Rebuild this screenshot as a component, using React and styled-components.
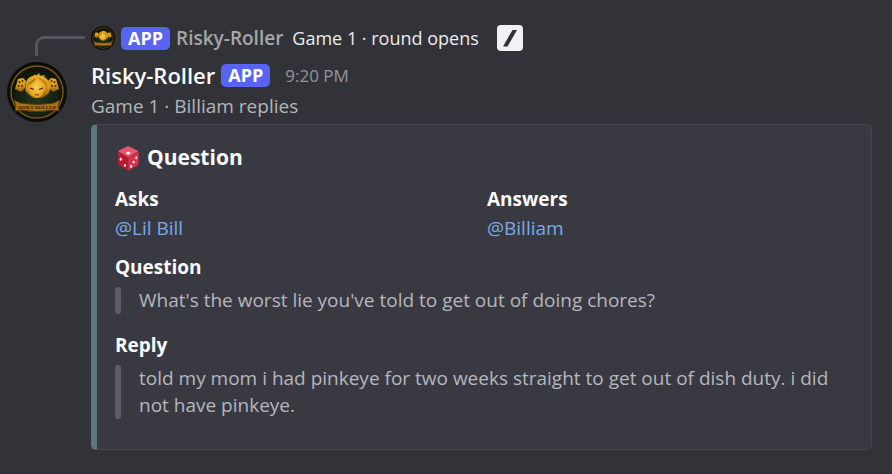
import React from "react";
import styled, { createGlobalStyle, css } from "styled-components";

const fields = [
  { name: "Asks", mention: "@Lil Bill", inline: true },
  { name: "Answers", mention: "@Billiam", inline: true },
  {
    name: "Question",
    quote: "What's the worst lie you've told to get out of doing chores?",
  },
  {
    name: "Reply",
    quote:
      "told my mom i had pinkeye for two weeks straight to get out of dish duty. i did not have pinkeye.",
  },
];

const Emblem = ({ size, detailed }) => (
  <svg width={size} height={size} viewBox="0 0 60 60" aria-hidden="true">
    <defs>
      <linearGradient id={`gold-${size}`} x1="0" y1="0" x2="0" y2="1">
        <stop offset="0" stopColor="#e8b022" />
        <stop offset="0.6" stopColor="#cf9016" />
        <stop offset="1" stopColor="#8a5a0a" />
      </linearGradient>
      <radialGradient id={`face-${size}`} cx="50%" cy="45%" r="55%">
        <stop offset="0" stopColor="#fbd052" />
        <stop offset="1" stopColor="#e09c1a" />
      </radialGradient>
      <radialGradient id={`field-${size}`} cx="50%" cy="60%" r="50%">
        <stop offset="0" stopColor="#21391d" />
        <stop offset="1" stopColor="#10150c" />
      </radialGradient>
    </defs>
    <circle cx="30" cy="30" r="30" fill="#0d0b05" />
    <circle
      cx="30"
      cy="30"
      r="26"
      fill={`url(#field-${size})`}
      stroke="#80570f"
      strokeWidth="1.4"
    />
    <g fill={`url(#gold-${size})`}>
      <path d="M27 12l2 2 3-3 1 3 5-1-2 4h-9z" />
      <path d="M11 17l5-1 3 3-1 7-4 4-6-3z" />
      <path d="M49 17l-5-1-3 3 1 7 4 4 6-3z" />
      <path d="M29 13c-6 1-10 4-10 9-1 4-1 7 1 9l6 5h9l6-4c2-3 3-6 2-9-1-6-6-10-14-10z" />
    </g>
    <path
      d="M21 25c1-5 5-8 8-9 5 2 9 4 9 9 0 6-4 10-8 11-5-1-9-5-9-11z"
      fill={`url(#face-${size})`}
    />
    <path
      d="M20 24c2-4 5-6 9-8-1 4-5 6-9 8zM40 25c-2-4-5-6-9-9 5 1 9 4 9 9z"
      fill="#b37812"
    />
    {detailed && (
      <>
        <path
          d="M23 26l4 1.500M36 26l-4 1.500"
          stroke="#402504"
          strokeWidth="1.300"
        />
        <path d="M28 32.500q2 1 4 0" stroke="#a33a13" strokeWidth="1.200" fill="none" />
        <g fill="#4a300a">
          <circle cx="12.500" cy="20" r="1" />
          <circle cx="15.500" cy="19" r="1" />
          <circle cx="11.500" cy="24" r="1" />
          <circle cx="15" cy="24" r="1" />
          <circle cx="44.500" cy="19" r="1" />
          <circle cx="47.500" cy="20" r="1" />
          <circle cx="45" cy="24" r="1" />
          <circle cx="48.500" cy="24" r="1" />
        </g>
      </>
    )}
    <path
      d="M7 38l6 3q17 3 34 0l6-3-2 6 1 5-6-1q-16 3-32 0l-6 1 1-5z"
      fill="#a87317"
      stroke="#5b3a08"
      strokeWidth="0.800"
    />
    {detailed && (
      <BannerText x="30" y="47">
        RISKY ROLLER
      </BannerText>
    )}
  </svg>
);

const DieIcon = () => (
  <svg width="26" height="28" viewBox="0 0 26 28" aria-hidden="true">
    <g transform="translate(2 2) scale(.94 .95)">
      <path d="M12 1l10 5q1 .5 0 1.200L12 13 2 7q-1-.6 0-1.200z" fill="#ec566b" />
      <path d="M1 7l11 6v14L2.500 21.500Q1 20.700 1 19z" fill="#b81c35" />
      <path d="M23 7l-11 6v14l9.500-5.500Q23 20.700 23 19z" fill="#d6314a" />
      <g fill="#fff">
        <ellipse cx="12" cy="8.500" rx="2.300" ry="1.500" />
        <ellipse cx="4" cy="15" rx="1.100" ry="1.500" />
        <ellipse cx="8.500" cy="21.500" rx="1.100" ry="1.500" />
        <ellipse cx="20.500" cy="13.500" rx="1.100" ry="1.500" />
        <ellipse cx="17.700" cy="18" rx="1.100" ry="1.500" />
        <ellipse cx="15" cy="22.500" rx="1.100" ry="1.500" />
      </g>
    </g>
  </svg>
);

const SlashIcon = () => (
  <svg width="26" height="26" viewBox="0 0 26 26" role="img" aria-label="Slash command">
    <rect width="26" height="26" rx="4" fill="#f2f2f4" />
    <path d="M15.500 5h4.500L10.500 21.500H6z" fill="#303136" />
  </svg>
);

const App = () => (
  <>
    <GlobalStyle />
    <Message>
      <Spine />
      <ReplyRow>
        <Emblem size={24} />
        <AppTag>APP</AppTag>
        <ReplyAuthor>Risky-Roller</ReplyAuthor>
        <ReplyText>Game 1 · round opens</ReplyText>
        <SlashIcon />
      </ReplyRow>
      <Avatar>
        <Emblem size={60} detailed />
      </Avatar>
      <Body>
        <Header>
          <Author>Risky-Roller</Author>
          <AppTag>APP</AppTag>
          <Time>9:20 PM</Time>
        </Header>
        <Content>Game 1 · Billiam replies</Content>
        <Embed>
          <Title>
            <DieIcon />
            Question
          </Title>
          <Fields>
            {fields.map(({ name, mention, quote, inline }) => (
              <Field key={name} $inline={inline}>
                <FieldName>{name}</FieldName>
                {mention && <Mention href="#">{mention}</Mention>}
                {quote && <Quote>{quote}</Quote>}
              </Field>
            ))}
          </Fields>
        </Embed>
      </Body>
    </Message>
  </>
);

export default App;

const GlobalStyle = createGlobalStyle`
  * {
    box-sizing: border-box;
  }

  body {
    margin: 0;
    background: #323338;
    color: #fbfbfb;
    font-family: "Open Sans", "Noto Sans", sans-serif;
    font-size: 19px;
    line-height: 27px;
  }

  svg {
    display: block;
    flex-shrink: 0;
  }
`;

const BannerText = styled.text`
  fill: #352206;
  font-family: "Liberation Serif", serif;
  font-size: 5px;
  font-weight: 700;
  text-anchor: middle;
`;

const Message = styled.article`
  display: grid;
  grid-template-columns: 60px 1fr;
  column-gap: 24px;
  padding: 24px 20px 24px 7px;
`;

const Spine = styled.div`
  align-self: end;
  height: 20px;
  margin: 0 -18px 0 28px;
  border: solid #55565d;
  border-width: 3px 0 0 3px;
  border-top-left-radius: 9px;
`;

const ReplyRow = styled.div`
  display: flex;
  align-items: center;
  height: 32px;
  padding-bottom: 4px;
  white-space: nowrap;

  > :last-child {
    margin-left: 18px;
  }
`;

const AppTag = styled.span`
  margin: 0 6px;
  padding: 0 7px;
  border-radius: 5px;
  background: #5865f2;
  color: #fff;
  font-size: 18px;
  font-weight: 700;
  line-height: 23px;
`;

const authorText = css`
  font-size: 19px;
  font-weight: 600;
`;

const ReplyAuthor = styled.span`
  ${authorText}
  margin-right: 9px;
  color: #a5a6ab;
`;

const ReplyText = styled.span`
  color: #ececee;
  font-size: 18px;
`;

const Avatar = styled.div`
  padding-top: 6px;
`;

const Body = styled.div`
  min-width: 0;
  padding-top: 6px;
`;

const Header = styled.header`
  display: flex;
  align-items: center;
`;

const Author = styled.span`
  ${authorText}
  font-size: 22px;
`;

const Time = styled.time`
  margin-left: 9px;
  color: #94959c;
  font-size: 17px;
`;

const Content = styled.div`
  margin: 4px 0;
  color: #b5b6bb;
`;

const Embed = styled.section`
  padding: 18px 24px 24px 18px;
  border: 1px solid #46474c;
  border-left: 6px solid #5a7782;
  border-radius: 5px;
  background: #393a41;
`;

const Title = styled.h2`
  display: flex;
  align-items: center;
  gap: 6px;
  margin: 0 0 16px;
  font-size: 21px;
  font-weight: 700;
  line-height: 28px;
`;

const Fields = styled.div`
  display: grid;
  grid-template-columns: 1fr 1fr;
  gap: 13px 12px;
`;

const Field = styled.div`
  grid-column: ${({ $inline }) => ($inline ? "auto" : "1 / -1")};
`;

const FieldName = styled.h3`
  margin: 0 0 4px;
  font-size: 19px;
  font-weight: 700;
  line-height: 24px;
`;

const Mention = styled.a`
  color: #7ba9e8;
  text-decoration: none;

  &:hover {
    text-decoration: underline;
  }
`;

const Quote = styled.blockquote`
  display: flex;
  gap: 18px;
  margin: 8px 0 6px;
  color: #b5b6bf;

  &::before {
    content: "";
    flex: 0 0 6px;
    border-radius: 3px;
    background: #5c5d66;
  }
`;
